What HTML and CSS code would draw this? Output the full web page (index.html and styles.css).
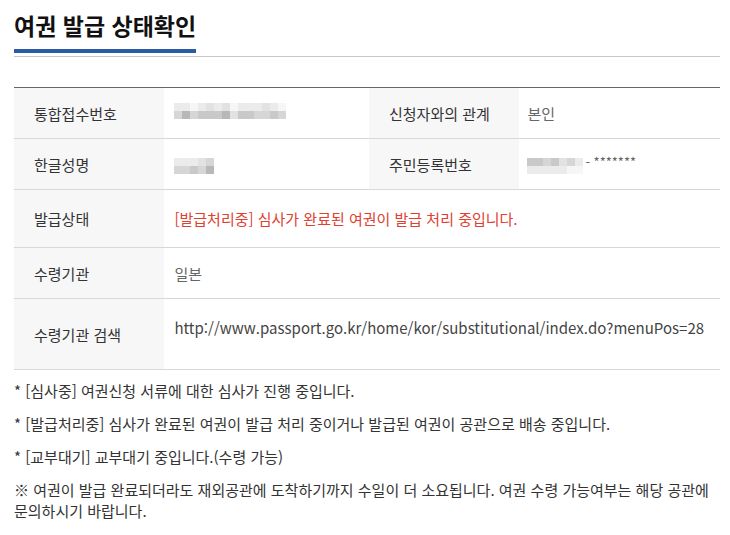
FILE: index.html
```html
<!DOCTYPE html>
<html lang="ko">
<head>
    <meta charset="UTF-8">
    <meta name="viewport" content="width=device-width, initial-scale=1.0">
    <title>여권 발급 상태확인</title>
    <link rel="stylesheet" href="styles.css">
</head>
<body>
    <div class="container">
        <div class="title-wrap">
            <h2 class="title">여권 발급 상태확인</h2>
        </div>

        <!-- Status table -->
        <table class="info-table">
            <tr class="row-1">
                <th class="col-1">통합접수번호</th>
                <td class="col-2">
                    <div class="mosaic mosaic-long">
                        <i class="c1"></i><i class="c1"></i><i class="c0"></i><i class="c1"></i><i class="c2"></i><i class="c1"></i><i class="c2"></i><i class="c0"></i><i class="c1"></i><i class="c1"></i><i class="c1"></i><i class="c2"></i><i class="c1"></i><i class="c0"></i>
                        <i class="c3"></i><i class="c5"></i><i class="c3"></i><i class="c4"></i><i class="c4"></i><i class="c4"></i><i class="c5"></i><i class="c2"></i><i class="c4"></i><i class="c4"></i><i class="c3"></i><i class="c3"></i><i class="c4"></i><i class="c3"></i>
                    </div>
                </td>
                <th class="col-3">신청자와의 관계</th>
                <td class="col-4 value-light">본인</td>
            </tr>
            <tr class="row-2">
                <th>한글성명</th>
                <td>
                    <div class="mosaic mosaic-short">
                        <i class="c1"></i><i class="c1"></i><i class="c1"></i><i class="c2"></i><i class="c3"></i>
                        <i class="c3"></i><i class="c3"></i><i class="c4"></i><i class="c3"></i><i class="c5"></i>
                    </div>
                </td>
                <th>주민등록번호</th>
                <td class="value-light">
                    <div class="rrn">
                        <div class="mosaic mosaic-rrn">
                            <i class="c4"></i><i class="c4"></i><i class="c3"></i><i class="c4"></i><i class="c2"></i><i class="c3"></i><i class="c1"></i>
                            <i class="c1"></i><i class="c1"></i><i class="c1"></i><i class="c1"></i><i class="c1"></i><i class="c0"></i><i class="c0"></i>
                        </div>
                        <span class="rrn-tail">- *******</span>
                    </div>
                </td>
            </tr>
            <tr class="row-3">
                <th>발급상태</th>
                <td colspan="3" class="status">[발급처리중] 심사가 완료된 여권이 발급 처리 중입니다.</td>
            </tr>
            <tr class="row-4">
                <th>수령기관</th>
                <td colspan="3" class="value-light">일본</td>
            </tr>
            <tr class="row-5">
                <th>수령기관 검색</th>
                <td colspan="3" class="url">http://www.passport.go.kr/home/kor/substitutional/index.do?menuPos=28</td>
            </tr>
        </table>

        <!-- Notes -->
        <div class="notes">
            <p>* [심사중] 여권신청 서류에 대한 심사가 진행 중입니다.</p>
            <p>* [발급처리중] 심사가 완료된 여권이 발급 처리 중이거나 발급된 여권이 공관으로 배송 중입니다.</p>
            <p>* [교부대기] 교부대기 중입니다.(수령 가능)</p>
            <p>※ 여권이 발급 완료되더라도 재외공관에 도착하기까지 수일이 더 소요됩니다. 여권 수령 가능여부는 해당 공관에 문의하시기 바랍니다.</p>
        </div>
    </div>
</body>
</html>
```

FILE: styles.css
```css
body {
    margin: 0;
    font-family: "Noto Sans CJK KR", "Noto Sans", sans-serif;
    color: #333;
    background: #fff;
}
.container {
    width: 706px;
    margin-left: 14px;
}
.title-wrap {
    border-bottom: 1px solid #c8c8c8;
    height: 56px;
}
.title {
    display: block;
    width: 182px;
    height: 53px;
    margin: 0;
    box-sizing: border-box;
    padding-top: 10px;
    font-size: 23px;
    font-weight: bold;
    line-height: 30px;
    color: #111;
    border-bottom: 4px solid #2b5ba6;
    white-space: nowrap;
}
.info-table {
    width: 706px;
    margin-top: 30px;
    border-collapse: collapse;
    border-top: 1px solid #666;
    table-layout: fixed;
    font-size: 15px;
}
.info-table th,
.info-table td {
    border-bottom: 1px solid #d8d8d8;
    text-align: left;
    vertical-align: middle;
}
.info-table th {
    background: #f7f7f7;
    font-weight: normal;
    color: #333;
    padding: 0 0 0 20px;
}
.info-table td {
    padding: 0 0 0 10px;
    color: #444;
}
.col-1 { width: 130px; }
.col-2 { width: 194px; }
.col-3 { width: 130px; }
.col-4 { width: 192px; }
.info-table td.col-4,
.row-2 td.value-light {
    padding-left: 8px;
}
.row-1 { height: 51px; }
.row-2 { height: 51px; }
.row-3 { height: 58px; }
.row-4 { height: 51px; }
.row-5 { height: 71px; }
.info-table td.value-light {
    color: #666;
}
.info-table td.status {
    color: #e0402f;
}
.info-table td.url {
    padding-bottom: 14px;
    color: #444;
}
.mosaic {
    display: grid;
    grid-auto-rows: 8px;
}
.mosaic i {
    display: block;
}
.mosaic-long {
    grid-template-columns: repeat(14, 8px);
    margin-top: -4px;
}
.mosaic-short {
    grid-template-columns: repeat(5, 8px);
    margin-top: 4px;
}
.mosaic-rrn {
    grid-template-columns: repeat(7, 8px);
}
.c0 { background: #f6f6f6; }
.c1 { background: #ebebeb; }
.c2 { background: #e2e2e2; }
.c3 { background: #d6d6d6; }
.c4 { background: #c9c9c9; }
.c5 { background: #b8b8b8; }
.rrn {
    display: flex;
    align-items: flex-start;
    margin-top: 4px;
}
.rrn-tail {
    margin-left: 2px;
    font-size: 13px;
    line-height: 8px;
    color: #666;
}
.notes {
    margin-top: 10px;
    font-size: 15px;
    line-height: 21px;
    color: #333;
}
.notes p {
    margin: 0 0 12px;
}
```
